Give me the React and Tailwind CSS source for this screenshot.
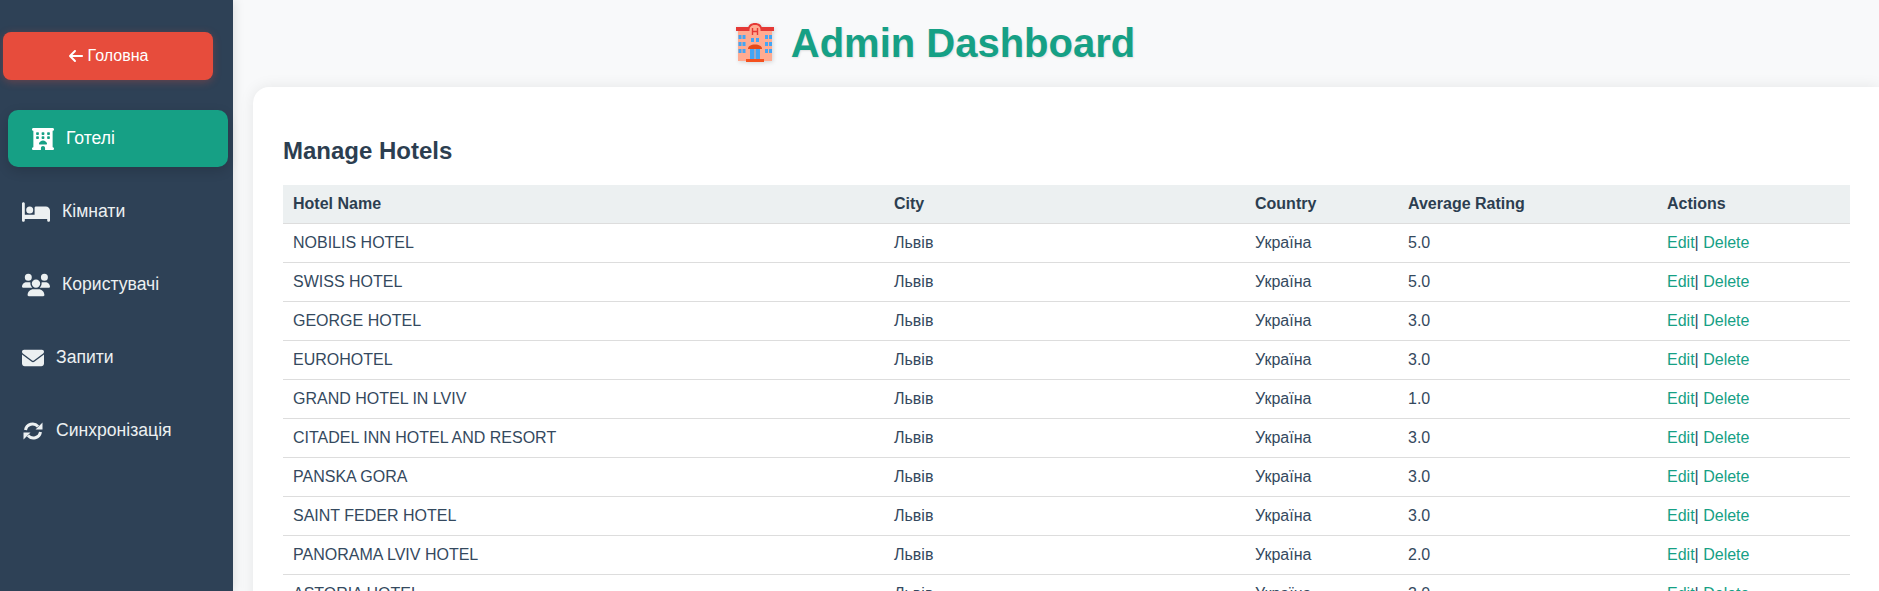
import React from 'react';
import { FaArrowLeft, FaBed, FaEnvelope, FaHotel, FaUsers } from 'react-icons/fa6';

const hotels = [
  ['NOBILIS HOTEL', '5.0'],
  ['SWISS HOTEL', '5.0'],
  ['GEORGE HOTEL', '3.0'],
  ['EUROHOTEL', '3.0'],
  ['GRAND HOTEL IN LVIV', '1.0'],
  ['CITADEL INN HOTEL AND RESORT', '3.0'],
  ['PANSKA GORA', '3.0'],
  ['SAINT FEDER HOTEL', '3.0'],
  ['PANORAMA LVIV HOTEL', '2.0'],
  ['ASTORIA HOTEL', '3.0'],
];

const HotelEmoji = () => (
  <svg viewBox="0 0 40 41" className="h-[41px] w-[40px] shrink-0 drop-shadow-[1px_1px_2px_rgba(0,0,0,0.15)]">
    <rect x="3" y="8" width="34" height="31" fill="#ffab91" />
    <path d="M1 5h38v4H1z" fill="#e53935" />
    <path d="M13 9V7c0-4 3-6 7-6s7 2 7 6v2z" fill="#e53935" />
    <path d="M14.500 16V8c0-3 2-5 5.500-5s5.500 2 5.500 5v8z" fill="#ffab91" />
    <path d="M17.500 6v7M22.500 6v7M17.500 9.500h5" stroke="#e53935" strokeWidth="1.400" fill="none" />
    {[3.500, 7.500, 30, 34].map((x) => (
      <React.Fragment key={x}>
        <rect x={x} y="13" width="3" height="4" fill="#42a5f5" />
        <rect x={x} y="20" width="3" height="4" fill="#42a5f5" />
        <rect x={x} y="27" width="3" height="4" fill="#42a5f5" />
      </React.Fragment>
    ))}
    <rect x="16" y="16" width="3" height="4" fill="#42a5f5" />
    <rect x="21" y="16" width="3" height="4" fill="#42a5f5" />
    <path d="M13 27c0-3 3-4.500 7-4.500s7 1.500 7 4.500z" fill="#e64a19" />
    <rect x="15" y="27" width="10" height="10" fill="#42a5f5" />
    <path d="M20 27v10" stroke="#ffab91" strokeWidth="1" />
    <rect x="11" y="37" width="18" height="3" fill="#f4511e" />
  </svg>
);

const SyncIcon = ({ className }) => (
  <svg viewBox="0 0 20 18" className={className}>
    <path d="M2.500 8A7.200 7.200 0 0 1 15 4.500M17.500 10A7.200 7.200 0 0 1 5 13.500" fill="none" stroke="currentColor" strokeWidth="3" />
    <path d="M19.500 0.500v7h-7zM0.500 17.500v-7h7z" fill="currentColor" />
  </svg>
);

const navItems = [
  { label: 'Кімнати', icon: FaBed, classes: 'text-[28px]', rowClasses: 'ml-[22px] gap-[12px]' },
  { label: 'Користувачі', icon: FaUsers, classes: 'text-[28px]', rowClasses: 'ml-[22px] gap-[12px]' },
  { label: 'Запити', icon: FaEnvelope, classes: 'text-[22px]', rowClasses: 'ml-[22px] gap-[12px]' },
  { label: 'Синхронізація', icon: SyncIcon, classes: 'h-[18px] w-[20px]', rowClasses: 'ml-[23px] gap-[13px]' },
];

const App = () => {
  return (
    <div className="flex h-screen overflow-hidden bg-[#f8f9fa] font-['Liberation_Sans',Arial,sans-serif] text-[#2c3e50]">
      <aside className="relative z-10 w-[233px] shrink-0 bg-[#2e4156] shadow-[2px_0_10px_rgba(0,0,0,0.1)]">
        <button className="mt-[32px] ml-[3px] flex h-[48px] w-[210px] items-center justify-center gap-[4px] rounded-[8px] bg-[#e74c3c] text-[16px] text-white shadow-[0_2px_8px_rgba(231,76,60,0.3)]">
          <FaArrowLeft className="text-[16px]" />
          <span>Головна</span>
        </button>
        <nav className="mt-[30px] flex flex-col text-[17.6px] text-[#ecf0f1]">
          <a className="ml-[8px] flex h-[57px] w-[220px] items-center gap-[12px] rounded-[10px] bg-[#16a085] pl-[24px] text-white shadow-[0_4px_12px_rgba(0,0,0,0.15)]">
            <FaHotel className="text-[22px]" />
            <span>Готелі</span>
          </a>
          <div className="mt-[16px] flex flex-col gap-[16px]">
            {navItems.map(({ label, icon: Icon, classes, rowClasses }) => (
              <a key={label} className={`flex h-[57px] items-center ${rowClasses}`}>
                <Icon className={classes} />
                <span>{label}</span>
              </a>
            ))}
          </div>
        </nav>
      </aside>

      <main className="min-w-0 flex-1 pl-[20px]">
        <h1 className="mb-[2px] flex h-[85px] w-[1364px] items-center justify-center gap-[16px] text-[40px] font-bold text-[#16a085] [text-shadow:1px_1px_2px_rgba(0,0,0,0.1)]">
          <HotelEmoji />
          <span>Admin Dashboard</span>
        </h1>
        <section className="min-h-[600px] rounded-tl-[16px] bg-white pt-[50px] pr-[29px] pl-[30px] shadow-[0_0_15px_rgba(0,0,0,0.08)]">
          <h2 className="mb-[20px] h-[28px] text-[24px] leading-[28px] font-bold">Manage Hotels</h2>
          <table className="w-full table-fixed border-collapse text-left text-[16px]">
            <colgroup>
              <col className="w-[601px]" />
              <col className="w-[361px]" />
              <col className="w-[153px]" />
              <col className="w-[259px]" />
              <col />
            </colgroup>
            <thead>
              <tr className="h-[38px] border-b border-[#ddd] bg-[#ecf0f1]">
                {['Hotel Name', 'City', 'Country', 'Average Rating', 'Actions'].map((title) => (
                  <th key={title} className="px-[10px] font-bold">{title}</th>
                ))}
              </tr>
            </thead>
            <tbody className="text-[#34495e]">
              {hotels.map(([name, rating]) => (
                <tr key={name} className="h-[39px] border-b border-[#ddd]">
                  <td className="px-[10px]">{name}</td>
                  <td className="px-[10px]">Львів</td>
                  <td className="px-[10px]">Україна</td>
                  <td className="px-[10px]">{rating}</td>
                  <td className="px-[10px]">
                    <a className="text-[#16a085]">Edit</a>| <a className="text-[#16a085]">Delete</a>
                  </td>
                </tr>
              ))}
            </tbody>
          </table>
        </section>
      </main>
    </div>
  );
};

export default App;
